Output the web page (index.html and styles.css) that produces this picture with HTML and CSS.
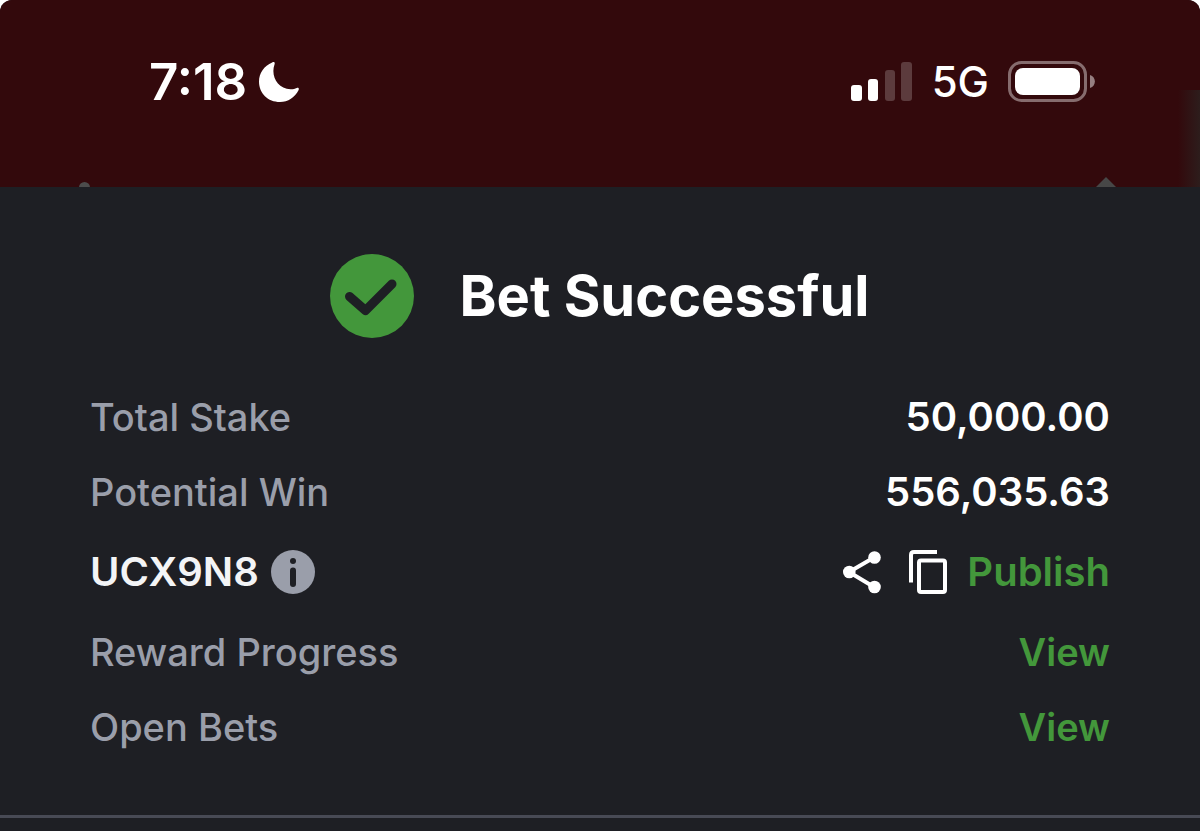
FILE: index.html
```
<!DOCTYPE html>
<html lang="en">
<head>
    <meta charset="UTF-8">
    <meta name="viewport" content="width=device-width, initial-scale=1.0">
    <title>Bet Successful</title>
    <link rel="stylesheet" href="styles.css">
</head>
<body>

    <div class="screen">
        <header class="status-bar">
            <div class="status-left">
                <span class="clock">7:18</span>
                <svg class="moon" viewBox="0 0 40 40" aria-hidden="true">
                    <path d="M13.2.4C15.2-.5 16.200.7 15.500 2.400C11.500 14 18.500 27.500 32 27.200C34.200 27.200 36 26.500 37.700 25.900C39.400 25.300 40.400 26.500 39.500 28.300C36 35.500 29 40 21 40C9 40 0 31.500 0 19.500C0 11 5 3.800 13.200.4Z"/>
                </svg>
            </div>
            <div class="status-right">
                <svg class="signal" viewBox="0 0 62 40" aria-hidden="true">
                    <rect x="0" y="23" width="11" height="16" rx="3"/>
                    <rect x="17" y="17" width="10" height="22" rx="3"/>
                    <rect class="off" x="34" y="8" width="10" height="31" rx="3"/>
                    <rect class="off" x="50" y="0" width="11" height="39" rx="3"/>
                </svg>
                <span class="network">5G</span>
                <svg class="battery" viewBox="0 0 88 42" aria-hidden="true">
                    <rect class="case" x="1.500" y="1.500" width="76" height="38" rx="12"/>
                    <rect x="7" y="7" width="65" height="27" rx="8"/>
                    <path class="cap" d="M82 14C88.500 16 88.500 25 82 27Z"/>
                </svg>
            </div>
            <span class="page-dot"></span>
            <span class="page-arrow"></span>
            <span class="page-edge"></span>
        </header>

        <main class="sheet">
            <div class="title">
                <svg class="check" viewBox="0 0 84 84" aria-hidden="true">
                    <circle cx="42" cy="42" r="42"/>
                    <path d="M19.500 42.500L35.500 56.500L62 30"/>
                </svg>
                <h1>Bet Successful</h1>
            </div>

            <div class="rows">
                <div class="row">
                    <span class="label">Total Stake</span>
                    <span class="amount">50,000.00</span>
                </div>
                <div class="row">
                    <span class="label">Potential Win</span>
                    <span class="amount">556,035.63</span>
                </div>
                <div class="row row-code">
                    <div class="code">
                        <span>UCX9N8</span>
                        <button class="icon-btn" aria-label="Booking code info">
                            <svg class="info" viewBox="0 0 44 44">
                                <circle class="disc" cx="22" cy="22" r="22"/>
                                <circle cx="22" cy="11" r="3"/>
                                <path d="M22 20.500V34"/>
                            </svg>
                        </button>
                    </div>
                    <div class="actions">
                        <button class="icon-btn" aria-label="Share">
                            <svg class="share" viewBox="0 0 38 44">
                                <path d="M31 7.500L6 22L31 37"/>
                                <circle cx="31.500" cy="7.500" r="6.300"/>
                                <circle cx="6.300" cy="22" r="6.300"/>
                                <circle cx="31.500" cy="37" r="6.300"/>
                            </svg>
                        </button>
                        <button class="icon-btn" aria-label="Copy">
                            <svg class="copy" viewBox="0 0 38 44">
                                <path d="M2 32.500V5Q2 2 5 2H28"/>
                                <rect x="10" y="10.500" width="26" height="31.500" rx="2"/>
                            </svg>
                        </button>
                        <button class="link-btn">Publish</button>
                    </div>
                </div>
                <div class="row">
                    <span class="label">Reward Progress</span>
                    <a class="link-btn" href="#">View</a>
                </div>
                <div class="row">
                    <span class="label">Open Bets</span>
                    <a class="link-btn" href="#">View</a>
                </div>
            </div>
        </main>
    </div>

</body>
</html>
```
FILE: styles.css
```
*, *::after, *::before{
    margin: 0;
    padding: 0;
    box-sizing: border-box;
}
:root {
    --bar: #33090c;
    --sheet: #1e1f24;
    --green: #43973b;
    --grey: #9a9eaa;
    --line: #484a55;
}

body{
    background-color: white;
    color: white;
    font-family: Inter, "Liberation Sans", sans-serif;
}
.screen{
    min-height: 100vh;
    display: flex;
    flex-direction: column;
    background-color: var(--sheet);
    border-radius: 12px 12px 0 0;
    overflow: hidden;
}

/* status bar */
.status-bar{
    position: relative;
    display: flex;
    justify-content: space-between;
    align-items: center;
    padding: 52px 104px 75px 149px;
    background-color: var(--bar);
}
.status-left, .status-right{
    display: flex;
    align-items: center;
    height: 60px;
}
.status-left{
    gap: 12px;
}
.clock{
    font-size: 51px;
    font-weight: 600;
    line-height: 60px;
}
.moon{
    width: 40px;
    height: 40px;
    fill: white;
}
.status-right{
    gap: 19px;
}
.signal{
    width: 62px;
    height: 40px;
    fill: white;
}
.signal .off{
    fill: #5c3b3d;
}
.network{
    font-size: 42px;
    font-weight: 500;
    line-height: 60px;
}
.battery{
    width: 88px;
    height: 42px;
    fill: white;
}
.battery .case{
    fill: none;
    stroke: #866c6e;
    stroke-width: 3;
}
.battery .cap{
    fill: #967f81;
}

/* bits of the page behind the sheet */
.page-dot{
    position: absolute;
    left: 79px;
    bottom: -6px;
    width: 11px;
    height: 11px;
    border-radius: 50%;
    background-color: #4c4c4c;
    clip-path: inset(0 0 6px 0);
}
.page-arrow{
    position: absolute;
    right: 84px;
    bottom: 0;
    width: 20px;
    height: 10px;
    background-color: #474747;
    clip-path: polygon(50% 0, 100% 100%, 0 100%);
}
.page-edge{
    position: absolute;
    right: 0;
    bottom: 0;
    width: 22px;
    height: 97px;
    background: linear-gradient(to right, var(--bar), #2d1d1c);
}

/* sheet */
.sheet{
    padding: 67px 90px 65px;
    border-bottom: 3px solid var(--line);
}
.title{
    display: flex;
    justify-content: center;
    align-items: center;
    gap: 45px;
    margin-bottom: 56px;
}
.check{
    width: 84px;
    height: 84px;
    fill: var(--green);
}
.check path{
    fill: none;
    stroke: var(--sheet);
    stroke-width: 9;
    stroke-linecap: round;
    stroke-linejoin: round;
}
h1{
    font-size: 56px;
    font-weight: 700;
    line-height: 84px;
}
.rows{
    display: flex;
    flex-direction: column;
    gap: 29px;
    font-size: 38px;
    line-height: 46px;
}
.row{
    display: flex;
    justify-content: space-between;
    align-items: center;
}
.row-code{
    height: 56px;
}
.label{
    color: var(--grey);
    font-weight: 500;
}
.amount, .code, .actions{
    font-size: 40px;
    font-weight: 600;
}
.code, .actions{
    display: flex;
    align-items: center;
}
.code{
    gap: 12px;
    color: #f3f4f6;
}
.icon-btn, .link-btn{
    border: none;
    background: none;
    font: inherit;
    cursor: pointer;
}
.icon-btn{
    display: flex;
}
.link-btn{
    color: var(--green);
    font-weight: 600;
    text-decoration: none;
}
.link-btn:hover{
    text-decoration: underline;
}
.actions{
    gap: 20px;
}
.info{
    width: 44px;
    height: 44px;
    fill: var(--sheet);
}
.info .disc{
    fill: var(--grey);
}
.info path{
    stroke: var(--sheet);
    stroke-width: 6;
    stroke-linecap: round;
}
.share, .copy{
    width: 38px;
    height: 44px;
    stroke: white;
    stroke-width: 4;
    fill: none;
}
.share{
    margin-right: 8px;
}
.share circle{
    fill: white;
    stroke: none;
}
```
